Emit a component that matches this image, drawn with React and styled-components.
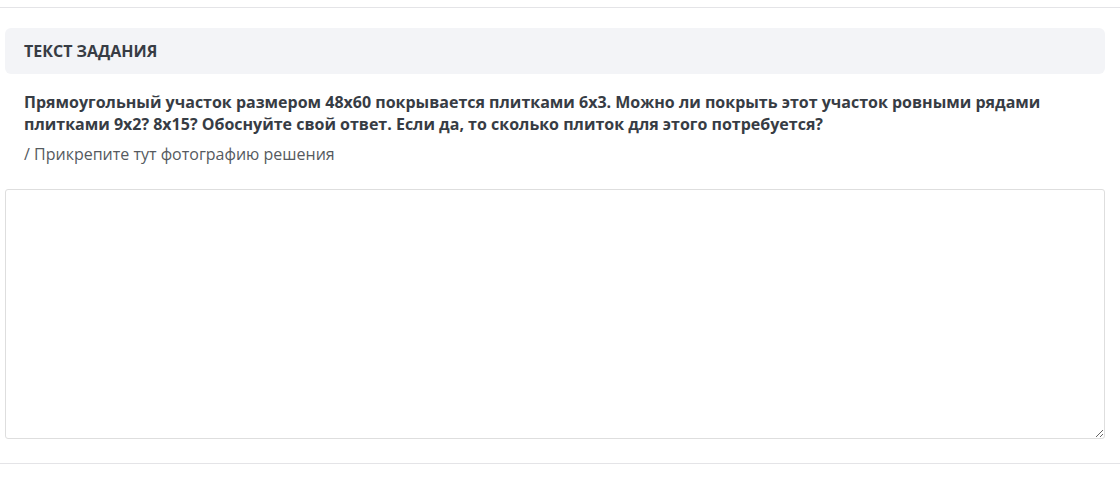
import React from "react";
import styled, { createGlobalStyle } from "styled-components";

const Global = createGlobalStyle`
  html, body { margin: 0; padding: 0; background: #fff; }
  body { font-family: "Open Sans", "Noto Sans", sans-serif; color: #333940; }
  * { box-sizing: border-box; }
`;

const Page = styled.div`
  width: 1120px;
  padding-top: 7px;
`;

const Rule = styled.hr`
  margin: 0;
  border: 0;
  border-top: 1px solid #e4e4e7;
`;

const Section = styled.section`
  padding: 20px 15px 24px 5px;
  display: flex;
  flex-direction: column;
`;

const Header = styled.div`
  height: 46px;
  background: #f3f4f7;
  border-radius: 6px;
  display: flex;
  align-items: center;
  padding-left: 19px;
  font-size: 16px;
  font-weight: 700;
  text-transform: uppercase;
  color: #373c44;
`;

const Body = styled.div`
  padding: 17px 19px 0;
`;

const Question = styled.p`
  margin: 0;
  font-size: 16px;
  font-weight: 700;
  line-height: 22px;
  color: #373c44;
`;

const Hint = styled.p`
  margin: 8px 0 0;
  font-size: 16px;
  line-height: 22px;
  color: #555a60;
`;

const Answer = styled.textarea`
  display: block;
  margin-top: 24px;
  width: 100%;
  height: 250px;
  border: 1px solid #dedede;
  border-radius: 3px;
  padding: 8px 12px;
  font-family: inherit;
  font-size: 16px;
  resize: vertical;
  outline: none;
`;

export default function App() {
  return (
    <Page>
      <Global />
      <Rule />
      <Section>
        <Header>Текст задания</Header>
        <Body>
          <Question>
            Прямоугольный участок размером 48х60 покрывается плитками 6х3. Можно ли покрыть этот участок ровными рядами плитками 9х2? 8х15? Обоснуйте свой ответ. Если да, то сколько плиток для этого потребуется?
          </Question>
          <Hint>/ Прикрепите тут фотографию решения</Hint>
        </Body>
        <Answer />
      </Section>
      <Rule />
    </Page>
  );
}
